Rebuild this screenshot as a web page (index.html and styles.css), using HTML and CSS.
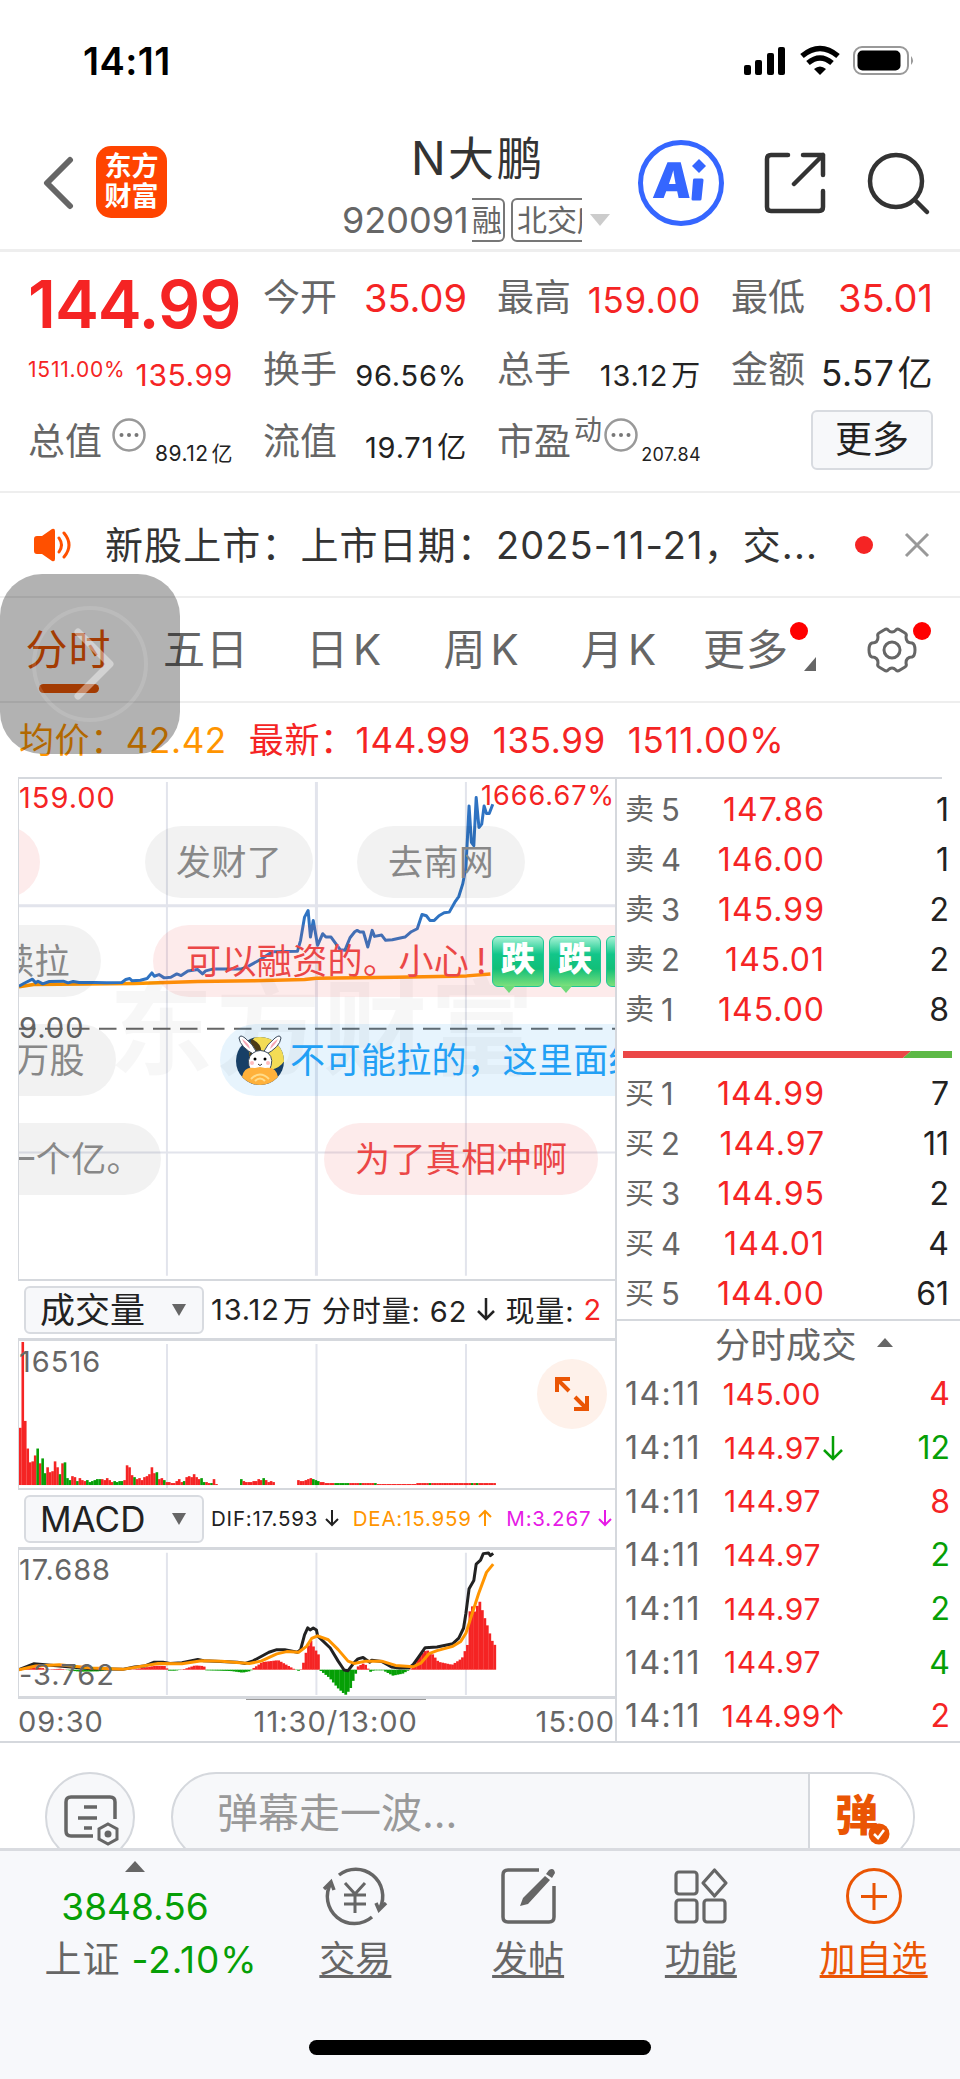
FILE: index.html
```html
<!DOCTYPE html>
<html lang="zh-CN">
<head>
<meta charset="UTF-8">
<meta name="viewport" content="width=device-width, initial-scale=1.0">
<title>N大鹏 920091</title>
<link rel="stylesheet" href="styles.css">
</head>
<body>

<div class="status">
  <span class="clock">14:11</span>
  <svg class="status-icons" width="172" height="32" viewBox="0 0 172 32">
    <rect x="0" y="20" width="7" height="10" rx="2"/>
    <rect x="11" y="15" width="7" height="15" rx="2"/>
    <rect x="23" y="8" width="7" height="22" rx="2"/>
    <rect x="34" y="2" width="7" height="28" rx="2"/>
    <path d="M58 11 Q76 -4 94 11" fill="none" stroke="#000" stroke-width="5.500"/>
    <path d="M64 18 Q76 8 88 18" fill="none" stroke="#000" stroke-width="5.500"/>
    <path d="M70 24 Q76 19 82 24 L76 30Z"/>
    <rect x="110" y="2" width="54" height="27" rx="8" fill="none" stroke="#999" stroke-width="2"/>
    <rect x="113.500" y="5.500" width="43" height="20" rx="5"/>
    <path d="M167 11 Q171 15.500 167 20Z" fill="#999"/>
  </svg>
</div>

<header class="header">
  <svg class="back" width="32" height="54" viewBox="0 0 32 54"><path d="M28 4 L5 27 L28 50" fill="none" stroke="#666" stroke-width="6" stroke-linecap="round" stroke-linejoin="round"/></svg>
  <div class="logo"><span>东方</span><span>财富</span></div>
  <div class="title">
    <h1>N大鹏</h1>
    <div class="code">
      <span>920091</span>
      <span class="tags"><i class="tag first">融</i><i class="tag">北交所</i></span>
      <b class="down"></b>
    </div>
  </div>
  <svg class="ai" width="88" height="88" viewBox="0 0 88 88">
    <circle cx="44" cy="44" r="40.500" fill="none" stroke="#3566ff" stroke-width="5"/>
    <text class="ai-text" x="15" y="59" transform="translate(5) skewX(-5)">A</text>
    <path d="M57.500 41 H65 L63 60 H56Z" fill="#3566ff" stroke="#3566ff" stroke-width="3" stroke-linejoin="round"/>
    <path d="M62 20 L69 27 L62 34 L55 27Z" fill="#3566ff"/>
  </svg>
  <svg class="share" width="62" height="62" viewBox="0 0 62 62">
    <path d="M24 3 H7 Q3 3 3 7 V55 Q3 59 7 59 H55 Q59 59 59 55 V39 M39 3 H59 V23 M59 3 L30 32" fill="none" stroke="#333" stroke-width="4.500" stroke-linecap="round" stroke-linejoin="round"/>
  </svg>
  <svg class="search" width="64" height="64" viewBox="0 0 64 64">
    <circle cx="29" cy="29" r="26" fill="none" stroke="#333" stroke-width="4.500"/>
    <path d="M48 48 L60 60" stroke="#333" stroke-width="4.500" stroke-linecap="round"/>
  </svg>
</header>

<section class="quote">
  <div class="cell"><strong class="price">144.99</strong></div>
  <div class="cell"><label>今开</label><span class="red v38">35.09</span></div>
  <div class="cell"><label>最高</label><span class="red v35 low">159.00</span></div>
  <div class="cell"><label>最低</label><span class="red v38">35.01</span></div>

  <div class="cell"><span class="red v21 raise">1511.00%</span><span class="red v30">135.99</span></div>
  <div class="cell"><label>换手</label><span class="v29">96.56%</span></div>
  <div class="cell"><label>总手</label><span class="v29">13.12<u>万</u></span></div>
  <div class="cell"><label>金额</label><span class="v35">5.57<u>亿</u></span></div>

  <div class="cell"><label>总值<svg class="dots" width="36" height="36" viewBox="0 0 36 36"><use href="#dots"/></svg></label><span class="v21">89.12<u>亿</u></span></div>
  <div class="cell"><label>流值</label><span class="v29">19.71<u>亿</u></span></div>
  <div class="cell"><label>市盈<sup>动</sup><svg class="dots near" width="36" height="36" viewBox="0 0 36 36"><g id="dots"><circle cx="18" cy="18" r="15.500" fill="none" stroke="#999" stroke-width="2.500"/><circle cx="10.500" cy="18" r="2" fill="#777"/><circle cx="18" cy="18" r="2" fill="#777"/><circle cx="25.500" cy="18" r="2" fill="#777"/></g></svg></label><span class="v18">207.84</span></div>
  <div class="cell end"><button class="more">更多</button></div>
</section>

<section class="notice">
  <svg width="40" height="34" viewBox="0 0 40 34"><path d="M1 11 Q1 8 4 8 H9 L19 1 Q22 0 22 3 V31 Q22 34 19 33 L9 26 H4 Q1 26 1 23Z" fill="#ff5000"/><path d="M26 10 Q31 17 26 24 M31 5 Q41 17 31 29" fill="none" stroke="#ff5000" stroke-width="3" stroke-linecap="round"/></svg>
  <p>新股上市：上市日期：2025-11-21，交...</p>
  <i class="dot"></i>
  <svg class="close" width="26" height="26" viewBox="0 0 26 26"><path d="M2 2 L24 24 M24 2 L2 24" stroke="#999" stroke-width="3"/></svg>
</section>

<nav class="tabs">
  <a class="active">分时</a>
  <a>五日</a>
  <a>日<s>K</s></a>
  <a>周<s>K</s></a>
  <a>月<s>K</s></a>
  <a class="more-tab">更多<i class="dot"></i><b class="corner"></b></a>
  <a class="gear">
    <svg width="50" height="46" viewBox="0 0 50 46"><g fill="none" stroke="#666" stroke-width="3"><path d="M17 3 Q20 1 21 3 Q25 7 29 3 Q30 1 33 3 L38 6 Q40 7 39 10 Q39 16 45 16 Q48 17 48 23 Q48 29 45 30 Q39 30 39 36 Q40 39 38 40 L33 43 Q30 45 29 43 Q25 39 21 43 Q20 45 17 43 L12 40 Q10 39 11 36 Q11 30 5 30 Q2 29 2 23 Q2 17 5 16 Q11 16 11 10 Q10 7 12 6Z"/><circle cx="25" cy="23" r="8"/></g></svg>
    <i class="dot"></i>
  </a>
</nav>

<div class="summary">
  <span class="orange">均价：42.42</span>
  <span>最新：144.99</span>
  <span>135.99</span>
  <span>1511.00%</span>
</div>

<main class="board">
  <div class="charts">
    <div class="chart price-chart">
      <svg class="plot" viewBox="48 24 1507 1506" preserveAspectRatio="none">
        <path class="grid" d="M422 33V1520M1178 33V1520M48 1149H1555"/>
        <path class="grid thick" d="M800 33V1520M48 406H1555"/>
        <path class="base" d="M48 776H1555"/>
        <path class="avg" d="M48 650 85 643 340 640 500 634 640 632 770 628 800 624 1000 621 1180 617 1240 611"/>
        <path class="price-line" d="M48 648 60 640 82 627 90 638 96 633 108 641 125 634 160 633 172 638 185 634 200 637 240 637 270 638 308 637 318 628 328 625 334 632 355 630 372 625 384 608 390 618 402 613 415 623 432 621 447 611 458 616 475 602 500 598 512 611 520 602 540 596 610 596 625 590 655 570 690 544 752 543 760 510 770 440 779 420 785 500 792 450 803 525 816 490 824 500 837 500 860 538 872 540 885 502 897 484 903 480 910 485 919 485 930 530 941 480 947 498 965 494 975 510 992 508 1015 502 1024 500 1040 484 1055 475 1067 432 1078 436 1087 450 1098 450 1110 436 1123 427 1136 425 1150 395 1160 378 1170 340 1178 290 1182 200 1186 105 1192 215 1198 225 1204 80 1211 170 1218 160 1224 105 1230 128 1237 128 1246 100"/>
      </svg>
      <span class="watermark">东方财富</span>
      <span class="axis top red">159.00</span>
      <span class="axis pct red">1666.67%</span>
      <span class="axis mid">9.00</span>

      <!-- danmaku -->
      <div class="bubble pink b1"></div>
      <div class="bubble b2">发财了</div>
      <div class="bubble b3">去南网</div>
      <div class="bubble b4">续拉</div>
      <div class="bubble pink b5">可以融资的。小心<s>!</s><em>跌</em><em>跌</em><em>跌</em></div>
      <div class="bubble b6">万股</div>
      <div class="bubble blue b7">
        <svg width="50" height="50" viewBox="0 0 50 50">
          <defs><clipPath id="face"><circle cx="25" cy="26" r="24"/></clipPath></defs>
          <g clip-path="url(#face)">
            <rect width="50" height="50" fill="#173f66"/>
            <circle cx="33" cy="16" r="19" fill="#f3dc55"/>
            <path d="M16 4 Q28 8 26 20 L14 22Z" fill="#4c3b16"/>
          </g>
          <g fill="#fff" stroke="#3b4a5c" stroke-width="1">
            <path d="M20 20 Q5 12 4 3 Q5 -1 10 3 Q18 9 22 18Z"/>
            <path d="M30 20 Q45 12 46 3 Q45 -1 40 3 Q32 9 28 18Z"/>
            <path d="M16 36 Q10 24 18 18 Q25 13 33 18 Q40 24 34 36Z"/>
          </g>
          <path d="M7 4 Q9 9 15 14 Q14 8 7 4ZM43 4 Q41 9 35 14 Q36 8 43 4Z" fill="#f7a6b4"/>
          <circle cx="20" cy="24" r="1.500"/><circle cx="30" cy="24" r="1.500"/>
          <circle cx="17" cy="28" r="2" fill="#fbb"/><circle cx="33" cy="28" r="2" fill="#fbb"/>
          <path d="M23 29 Q25 32 27 29" fill="none" stroke="#333"/>
          <path d="M7 42 Q9 31 20 33 L25 32 L30 33 Q41 31 43 42 Q35 50 25 50 Q15 50 7 42Z" fill="#ffb13b"/>
          <path d="M16 44 Q25 35 34 44 M20 46 Q25 41 30 46" fill="none" stroke="#ffdc8a" stroke-width="2"/>
        </svg>不可能拉的，这里面红
      </div>
      <div class="bubble b8">一个亿。</div>
      <div class="bubble pink b9">为了真相冲啊</div>
    </div>

    <div class="bar">
      <button class="picker">成交量<b></b></button>
      <span class="info">13.12<u>万</u> 分时量: 62 <svg width="20" height="24" viewBox="0 0 20 24"><path d="M10 1V22M2 14L10 22L18 14" fill="none" stroke="#222" stroke-width="2.500"/></svg> 现量: <span class="red">2</span></span>
    </div>
    <div class="chart volume-chart">
      <svg class="plot" id="volume" viewBox="0 0 596 149" preserveAspectRatio="none">
        <path class="grid" d="M148 3V149M297.500 3V149M447 3V149"/>
      </svg>
      <span class="axis vol">16516</span>
      <svg class="expand" width="70" height="70" viewBox="0 0 70 70"><circle cx="35" cy="35" r="35" fill="#fef1ea"/><path d="M20 33V20H33M20 20L32 32M37 50H50V37M50 50L38 38" fill="none" stroke="#ea5504" stroke-width="4"/></svg>
    </div>

    <div class="bar">
      <button class="picker">MACD<b></b></button>
      <span class="info small"><span>DIF:17.593 <svg width="14" height="18" viewBox="0 0 14 18"><path id="arr" d="M7 1V16M1 10L7 16L13 10" fill="none" stroke="currentColor" stroke-width="2"/></svg></span><span class="orange">DEA:15.959 <svg width="14" height="18" viewBox="0 0 14 18"><use href="#arr" transform="rotate(180 7 9)"/></svg></span><span class="purple">M:3.267 <svg width="14" height="18" viewBox="0 0 14 18"><use href="#arr"/></svg></span></span>
    </div>
    <div class="chart macd-chart">
      <svg class="plot" viewBox="48 147 1507 444" preserveAspectRatio="none">
        <path class="grid" d="M422 155V588M800 155V588M1178 155V588"/>
        <g id="macd"></g>
        <path class="dif" d="M48 511 85 493 150 500 230 508 310 510 340 503 365 500 390 488 412 488 430 492 460 490 500 480 515 484 600 488 620 492 640 484 680 458 700 450 720 450 752 458 760 450 770 405 778 384 784 390 792 384 800 390 803 408 835 445 855 485 870 512 880 514 895 490 905 478 918 474 925 480 935 488 940 482 965 486 990 503 1010 506 1035 505 1045 495 1060 470 1075 444 1105 442 1145 432 1160 415 1172 385 1178 340 1186 265 1198 240 1204 190 1215 178 1222 158 1235 156 1240 164 1247 157"/>
        <path class="dea" d="M48 511 90 500 150 496 230 506 310 510 400 492 460 493 510 484 560 485 630 492 660 485 700 463 725 456 755 458 775 440 788 416 803 408 830 420 855 450 880 485 895 492 925 485 965 485 1000 498 1045 502 1065 490 1085 462 1105 453 1145 440 1165 425 1178 400 1190 355 1210 280 1230 215 1247 190"/>
      </svg>
      <span class="axis hi">17.688</span>
      <span class="axis lo">-3.762</span>
    </div>
    <div class="times"><span>09:30</span><span class="noon">11:30/13:00</span><span>15:00</span></div>
  </div>

  <aside class="side">
    <div class="orders" id="sell"></div>
    <svg class="ratio" width="329" height="7" viewBox="0 0 329 7"><path d="M0 0H288L280 7H0Z" fill="#eb4747"/><path d="M288 0H329V7H280Z" fill="#5db946"/></svg>
    <div class="orders" id="buy"></div>
    <h2 class="ticks-title">分时成交<b></b></h2>
    <div class="ticks" id="ticks"></div>
  </aside>
</main>

<section class="danmaku">
  <div class="round">
    <svg width="56" height="52" viewBox="0 0 56 52"><g fill="none" stroke="#666" stroke-width="3.500"><path d="M51 24V7Q51 2 46 2H7Q2 2 2 7V36Q2 41 7 41H29M20 12H33M14 23H33M20 33H28"/><path d="M44 29L53 34V44L44 49L35 44V34Z" stroke-width="3"/></g><circle cx="44" cy="39" r="3.500" fill="#666"/></svg>
  </div>
  <div class="send">
    <span class="placeholder">弹幕走一波...</span>
    <span class="toggle">弹<svg width="22" height="22" viewBox="0 0 22 22"><circle cx="11" cy="11" r="10.500" fill="#ea5504"/><path d="M6 11L10 15L16 7" fill="none" stroke="#fff" stroke-width="2.500"/></svg></span>
  </div>
</section>

<footer class="tabbar">
  <div class="index">
    <b class="up"></b>
    <span class="green">3848.56</span>
    <span class="name">上证 <i class="green">-2.10%</i></span>
  </div>
  <a>
    <svg width="66" height="60" viewBox="0 0 66 60"><g fill="none" stroke="#666" stroke-width="3.500"><path d="M17 9A27 27 0 0 1 58 42M50 51A27 27 0 0 1 9 17M2 23L9 16L12 24M64 37L57 44L54 37"/><path d="M23 17L33 28L43 17M22 29H44M22 38H44M33 28V47" stroke-width="3"/></g></svg>
    交易
  </a>
  <a>
    <svg width="58" height="60" viewBox="0 0 58 60"><path d="M40 4H9Q4 4 4 9V51Q4 56 9 56H50Q55 56 55 51V20" fill="none" stroke="#666" stroke-width="3.500"/><path d="M50 4Q55 1 56 7L53 12L47 8Z M46 10L51 14L29 38L21 40L24 32Z" fill="#666"/></svg>
    发帖
  </a>
  <a>
    <svg width="56" height="60" viewBox="0 0 56 60"><g fill="none" stroke="#666" stroke-width="3.200"><rect x="3" y="6" width="21" height="22" rx="3"/><rect x="3" y="34" width="21" height="22" rx="3"/><rect x="31" y="34" width="21" height="22" rx="3"/><path d="M41.500 4L53 17L41.500 30L30 17Z" stroke-linejoin="round"/></g></svg>
    功能
  </a>
  <a class="add">
    <svg width="60" height="60" viewBox="0 0 60 60"><g fill="none" stroke="#ea5504" stroke-width="3"><circle cx="30" cy="30" r="26.500"/><path d="M30 17V44M17 30.500H43"/></g></svg>
    加自选
  </a>
</footer>
<div class="home"></div>

<!-- AssistiveTouch button -->
<div class="assist">
  <svg width="180" height="180" viewBox="0 0 180 180"><circle cx="90" cy="90" r="56" fill="none" stroke="#fff" stroke-opacity=".12" stroke-width="4"/><path d="M78 58L110 90L78 122" fill="none" stroke="#fff" stroke-opacity=".42" stroke-width="7" stroke-linecap="round" stroke-linejoin="round"/></svg>
</div>

<script>
  var sell = [["卖5", "147.86", 1], ["卖4", "146.00", 1], ["卖3", "145.99", 2], ["卖2", "145.01", 2], ["卖1", "145.00", 8]];
  var buy = [["买1", "144.99", 7], ["买2", "144.97", 11], ["买3", "144.95", 2], ["买4", "144.01", 4], ["买5", "144.00", 61]];
  var ticks = [
    ["145.00", "", 4, "red"],
    ["144.97", "down", 12, "green"],
    ["144.97", "", 8, "red"],
    ["144.97", "", 2, "green"],
    ["144.97", "", 2, "green"],
    ["144.97", "", 4, "green"],
    ["144.99", "up", 2, "red"]
  ];

  function fillOrders(id, rows) {
    document.getElementById(id).innerHTML = rows.map(function(r) {
      return "<div class='order'><label>" + r[0][0] + "<s>" + r[0][1] + "</s></label><span class='red'>" + r[1] + "</span><span>" + r[2] + "</span></div>";
    }).join("");
  }
  fillOrders("sell", sell);
  fillOrders("buy", buy);

  document.getElementById("ticks").innerHTML = ticks.map(function(t) {
    var arrow = "";
    if (t[1]) {
      arrow = "<svg class='" + t[3] + "' width='20' height='26' viewBox='0 0 20 26'><path d='" +
        (t[1] === "down" ? "M10 1V24M1 15L10 24L19 15" : "M10 25V2M1 11L10 2L19 11") +
        "' fill='none' stroke='currentColor' stroke-width='2.500'/></svg>";
    }
    return "<div class='tick'><time>14:11</time><span class='red'>" + t[0] + "</span><i>" + arrow + "</i><span class='" + t[3] + "'>" + t[2] + "</span></div>";
  }).join("");

  // Volume per minute, negative = falling
  var volume = [58, 145, 65, 37, 23, 24, 30, -37, 22, -27, -12, 18, 13, 14, 24, 18, -11, 22, -23, -7, -5, 9, 8, -4, 7, 5, 4, -5, -3, -4, -5, -6, -6, 6, 5, 7, 5, 3, -4, -3, -4, -4, 5, 20, 18, 10, -8, 6, 7, 5, 8, 9, 11, 18, 12, -13, 6, 7, -5, 3, 3, 2, 2, 4, 6, 3, -4, 8, 9, 8, 11, 8, 6, -7, -3, 3, 2, -2, 6, 1,
    0, 0, 0, 0, 0, 0, 0, 0, 0, -6, 4, 3, 3, 3, 4, 4, 6, 5, -7, 5, 3, 4, 3, 0, 0, 0, 0, 0, 0, 0, 0, 0, 5, 4, 4, 5, 6, 7, -6, -5, -4, 3, 3, 2, 2, 2];
  for (var i = volume.length; i < 192; i++) {
    volume.push((i > 126 && i < 133) || i === 137 || i === 143 || i === 165 || i === 182 || i === 184 ? -2 : (i > 143 && i < 160 ? 1 : 2));
  }
  var W = 596 / 240;
  document.getElementById("volume").innerHTML += volume.map(function(v, i) {
    var h = Math.abs(v);
    return "<rect x='" + (i * W).toFixed(2) + "' y='" + (146 - h) + "' width='2.600' height='" + h + "' fill='" + (v < 0 ? "#069f06" : "#f52424") + "'/>";
  }).join("");

  // MACD histogram, [x, value] key points
  var keys = [[48, 0], [75, 8], [105, 5], [112, 0], [150, 3], [175, -3], [200, -6], [245, -5], [275, 0], [335, 1], [390, 12], [415, 11], [422, -3], [440, -3], [460, 1], [490, 13], [512, 11], [518, -2], [580, -4], [610, -9], [630, -4], [638, 5], [660, 23], [700, 29], [725, 12], [740, 2], [755, -5], [762, 12], [772, 60], [782, 90], [790, 68], [803, 44], [806, -2], [830, -25], [850, -55], [870, -77], [882, -60], [897, -8], [902, 10], [917, 20], [926, 8], [930, -8], [942, -2], [965, -2], [990, -18], [1015, -12], [1035, 2], [1060, 45], [1075, 60], [1087, 52], [1105, 24], [1140, 15], [1165, 35], [1180, 80], [1186, 205], [1200, 170], [1207, 218], [1220, 165], [1230, 130], [1240, 90], [1253, 65]];
  var bars = "";
  for (var x = 48, k = 0; x < 1252; x += 6.28) {
    while (keys[k + 1][0] < x) k++;
    var a = keys[k], b = keys[k + 1];
    var v = a[1] + (b[1] - a[1]) * (x - a[0]) / (b[0] - a[0]);
    bars += "<rect x='" + x.toFixed(1) + "' y='" + (511 - Math.max(v, 0)).toFixed(1) + "' width='7' height='" + Math.max(Math.abs(v), 1).toFixed(1) + "' fill='" + (v < 0 ? "#069f06" : "#f52424") + "'/>";
  }
  document.getElementById("macd").innerHTML = bars;
</script>

</body>
</html>
```
FILE: styles.css
```css
* {
  box-sizing: border-box;
}
body {
  margin: 0;
  width: 960px;
  height: 2079px;
  overflow: hidden;
  position: relative;
  background: #fff;
  color: #222;
  font-family: Inter, "Noto Sans CJK SC", sans-serif;
}
h1, h2, p {
  margin: 0;
  font-weight: 400;
}
i, em {
  font-style: normal;
}
s, u {
  text-decoration: none;
}
u {
  margin-left: 3px;
}
svg {
  display: block;
  flex: none;
}
button {
  font-family: inherit;
  color: #222;
  background: #f7f8fa;
  border: 2px solid #d8dbe0;
  border-radius: 6px;
  padding: 0;
}
.red { color: #f52424; }
.green { color: #069f06; }
.orange { color: #ff9500; }
.purple { color: #e61ae6; }
.dot {
  width: 18px;
  height: 18px;
  border-radius: 50%;
  background: #f52424;
}

/* status bar */
.status {
  height: 122px;
  padding: 45px 44px 0 83px;
  display: flex;
  justify-content: space-between;
}
.clock {
  font-size: 38px;
  line-height: 32px;
  font-weight: 600;
  color: #000;
  letter-spacing: .4px;
}

/* header */
.header {
  height: 130px;
  border-bottom: 3px solid #eee;
  display: flex;
  align-items: flex-start;
  padding-left: 42px;
}
.back {
  margin-top: 34px;
}
.logo {
  width: 71px;
  height: 72px;
  margin: 24px 0 0 22px;
  padding-top: 6px;
  border-radius: 15px;
  background: #ff4400;
  color: #fff;
  font-size: 27px;
  font-weight: 700;
  line-height: 30px;
  text-align: center;
}
.logo span {
  display: block;
}
.title {
  width: 272px;
  margin-left: 175px;
}
.title h1 {
  font-size: 46px;
  line-height: 60px;
  margin-top: 6px;
  letter-spacing: 2.5px;
  text-align: center;
  color: #333;
}
.code {
  display: flex;
  align-items: center;
  height: 46px;
  margin-top: 9px;
  font-size: 36px;
  color: #666;
}
.code > span:first-child {
  width: 130px;
}
.tags {
  display: flex;
  width: 110px;
  overflow: hidden;
  font-size: 30px;
}
.tag {
  flex: none;
  height: 44px;
  line-height: 40px;
  padding: 0 4px;
  border: 2px solid #777;
  border-radius: 6px;
}
.first {
  padding-left: 0;
  border-left: 0;
  border-radius: 0 6px 6px 0;
  margin-right: 6px;
  width: 33px;
}
.down {
  margin-left: 8px;
  border: 10px solid transparent;
  border-top: 12px solid #ccc;
  border-bottom: 0;
}
.ai {
  margin: 17px 0 0 23px;
}
.ai-text {
  font-size: 49px;
  font-weight: 900;
  fill: #3566ff;
}
.share {
  margin: 30px 0 0 39px;
}
.search {
  margin: 30px 0 0 41px;
}

/* quote */
.quote {
  height: 241px;
  padding: 10px 27px 0 28px;
  display: grid;
  grid-template-columns: 205px 204px 204px 202px;
  grid-template-rows: repeat(3, 72px);
  column-gap: 30px;
  border-bottom: 2px solid #eee;
}
.cell {
  display: flex;
  justify-content: space-between;
  align-items: flex-start;
  line-height: 72px;
  height: 72px;
  white-space: nowrap;
  color: #222;
}
.cell label {
  display: flex;
  font-size: 37px;
  color: #666;
}
.cell .red {
  color: #f52424;
}
.price {
  font-size: 66px;
  font-weight: 600;
  line-height: 84px;
  letter-spacing: -1px;
  color: #f52424;
}
.v38 { font-size: 38px; }
.v35 { font-size: 35px; line-height: 78px; letter-spacing: .6px; }
.low { line-height: 76px; }
.v30 { font-size: 30px; line-height: 82px; letter-spacing: .6px; }
.v29 { font-size: 29px; line-height: 83px; letter-spacing: .8px; }
.v21 { font-size: 21px; line-height: 95px; letter-spacing: .5px; }
.v18 { font-size: 18px; line-height: 97px; letter-spacing: .4px; }
.raise {
  line-height: 71px;
  letter-spacing: .8px;
}
.cell sup {
  font-size: 28px;
  line-height: 48px;
  margin-left: 3px;
}
.dots {
  margin: 11px 0 0 9px;
}
.near {
  margin-left: 1px;
}
.end {
  justify-content: flex-end;
}
.more {
  width: 122px;
  height: 60px;
  margin-top: 4px;
  font-size: 37px;
  line-height: 52px;
}

/* notice */
.notice {
  height: 105px;
  border-bottom: 2px solid #eee;
  display: flex;
  align-items: center;
  padding-left: 33px;
}
.notice p {
  width: 715px;
  margin-left: 32px;
  padding-bottom: 5px;
  font-size: 38px;
  letter-spacing: 1.1px;
  white-space: nowrap;
  color: #333;
}
.notice .dot {
  margin-left: 35px;
}
.close {
  margin-left: 31px;
}

/* period tabs */
.tabs {
  height: 105px;
  border-bottom: 2px solid #eee;
  display: grid;
  grid-template-columns: 137px 138px 138px 137px 138px 137px 135px;
  line-height: 103px;
  font-size: 42px;
  color: #666;
  text-align: center;
  letter-spacing: 1px;
}
.tabs a {
  position: relative;
}
.tabs s {
  margin-left: 4px;
}
.tabs .active {
  color: #ea5504;
}
.active::after {
  content: "";
  position: absolute;
  left: 39px;
  top: 86px;
  width: 60px;
  height: 9px;
  border-radius: 5px;
  background: #ea5504;
}
.tabs .dot {
  position: absolute;
  top: 24px;
  left: 102px;
  background: #f00;
}
.tabs .more-tab {
  padding-right: 21px;
}
.corner {
  position: absolute;
  left: 116px;
  top: 59px;
  border-left: 12px solid transparent;
  border-bottom: 14px solid #666;
}
.gear svg {
  margin: 29px 0 0 42px;
}
.tabs .gear .dot {
  left: 88px;
}

/* latest price line */
.summary {
  height: 74px;
  padding-left: 19px;
  display: flex;
  gap: 22px;
  font-size: 35px;
  line-height: 74px;
  color: #f52424;
  letter-spacing: .6px;
}

/* board */
.board {
  display: flex;
  height: 966px;
  border-bottom: 2px solid #d5d8dd;
}
.charts {
  width: 599px;
  margin-left: 18px;
  border-right: 2px solid #d5d8dd;
}
.chart {
  position: relative;
  overflow: hidden;
  border: 2px solid #d5d8dd;
  border-width: 2px 0 2px 1px;
}
.price-chart {
  height: 504px;
}
.plot {
  position: absolute;
  left: 0;
  top: 0;
  width: 596px;
  height: 100%;
}
.plot path {
  fill: none;
  stroke-width: 3px;
  vector-effect: non-scaling-stroke;
  stroke-linejoin: round;
}
.plot .grid {
  stroke: #e2e4ec;
  stroke-width: 2px;
}
.plot .thick {
  stroke-width: 3px;
}
.plot .base {
  stroke: #666;
  stroke-width: 2px;
  stroke-dasharray: 17.5 9.5;
  stroke-dashoffset: 1;
}
.plot .avg {
  stroke: #ff9500;
  stroke-width: 3.5px;
}
.plot .price-line { stroke: #2f73c2; }
.plot .dif { stroke: #222; }
.plot .dea { stroke: #ff9500; }
.watermark {
  position: absolute;
  left: 90px;
  top: 180px;
  font-size: 104px;
  font-weight: 700;
  line-height: 140px;
  letter-spacing: 3px;
  color: rgba(0, 0, 0, .03);
}
.axis {
  position: absolute;
  left: 0;
  font-size: 29px;
  line-height: 30px;
  letter-spacing: 1px;
  color: #666;
}
.axis.red { color: #f52424; }
.axis.top { top: 4px; }
.axis.pct {
  left: auto;
  right: 0;
  top: 2px;
  font-size: 27px;
}
.axis.mid { top: 234px; }

.bubble {
  position: absolute;
  height: 72px;
  line-height: 72px;
  padding: 0 31px;
  border-radius: 36px;
  background: rgba(0, 0, 0, .05);
  color: #888;
  font-size: 35px;
  letter-spacing: .4px;
  white-space: nowrap;
}
.pink {
  background: rgba(235, 71, 71, .11);
  color: #eb4747;
}
.blue {
  background: rgba(34, 153, 238, .11);
  color: #22a0f5;
}
.b1, .b2, .b3 { top: 47px; }
.b4, .b5 { top: 146px; }
.b6, .b7 { top: 245px; }
.b8, .b9 { top: 344px; }
.b1 { right: 575px; width: 120px; }
.b2 { left: 126px; }
.b3 { left: 338px; }
.b4 { right: 514px; }
.b5 { left: 134px; display: flex; padding-left: 33px; }
.b5 s { width: 23px; padding-left: 7px; }
.b6 { right: 499px; }
.b7 { left: 201px; display: flex; padding-left: 15px; }
.b7 svg { margin: 11px 5px 0 0; }
.b8 { right: 454px; padding-right: 19px; }
.b9 { left: 305px; }
.bubble em {
  width: 52px;
  height: 51px;
  margin: 11px 5px 0 0;
  border-radius: 6px;
  border: 1px solid #1dc795;
  background: linear-gradient(#a5f3d5, #12c68a 35%, #12bf78 65%, #7be07c);
  color: #fff;
  font-size: 34px;
  font-weight: 900;
  line-height: 43px;
  text-align: center;
  position: relative;
}
.bubble em::after {
  content: "";
  position: absolute;
  left: 10px;
  top: 49px;
  border: 6px solid transparent;
  border-top: 7px solid #6fda7a;
  border-bottom: 0;
}

.bar {
  height: 57px;
  display: flex;
  align-items: center;
  padding-left: 6px;
}
.picker {
  width: 180px;
  height: 48px;
  padding: 0 16px 0 14px;
  display: flex;
  align-items: center;
  justify-content: space-between;
  font-size: 35px;
  line-height: 42px;
}
.picker b {
  border: 7px solid transparent;
  border-top: 12px solid #666;
  border-bottom: 0;
}
.info {
  display: flex;
  align-items: center;
  margin: -1px 0 0 7px;
  font-size: 29px;
  letter-spacing: .9px;
  white-space: pre;
}
.small {
  font-size: 20.5px;
  gap: 14px;
  letter-spacing: .8px;
}
.small > span {
  display: flex;
  align-items: center;
}
.volume-chart {
  height: 152px;
  border-top-width: 3px;
}
.axis.vol { top: 6px; }
.expand {
  position: absolute;
  left: 518px;
  top: 18px;
}
.macd-chart {
  height: 152px;
  border-width: 3px 0 3px 1px;
}
.axis.hi { top: 5px; }
.axis.lo { top: 110px; }
.times {
  display: flex;
  justify-content: space-between;
  font-size: 29px;
  line-height: 45px;
  letter-spacing: 1px;
  color: #666;
}
.noon {
  position: relative;
  margin-left: 32px;
}
.noon::before {
  content: "";
  position: absolute;
  left: -8px;
  right: -8px;
  top: 0;
  height: 1px;
  background: #999;
}

/* order book */
.side {
  width: 343px;
}
.orders {
  padding: 0 11px 0 8px;
}
#sell {
  padding-top: 6px;
  border-top: 2px solid #d5d8dd;
  width: 325px;
  padding-right: 0;
}
.order {
  display: grid;
  grid-template-columns: 60px 140px 1fr;
  height: 50px;
  line-height: 50px;
  font-size: 32px;
  text-align: right;
}
#sell .order {
  width: 324px;
}
.order .red {
  letter-spacing: 1px;
}
.order label {
  display: flex;
  color: #666;
  font-size: 29px;
}
.order s {
  margin-left: 7px;
  font-size: 31px;
}
.ratio {
  margin: 16px 0 11px 6px;
}
.ticks-title {
  height: 48px;
  padding-bottom: 4px;
  border-top: 2px solid #d5d8dd;
  display: flex;
  align-items: center;
  padding-left: 98px;
  font-size: 35px;
  letter-spacing: .5px;
  color: #666;
}
.ticks-title b {
  margin-left: 20px;
  border: 8px solid transparent;
  border-top: 0;
  border-bottom: 9px solid #666;
}
.ticks {
  padding: 0 10px 0 8px;
}
.tick {
  display: grid;
  grid-template-columns: 77px 119px 24px 1fr;
  align-items: center;
  height: 53.7px;
  font-size: 32px;
  text-align: right;
}
.tick time {
  color: #666;
  text-align: left;
  letter-spacing: 1.4px;
}
.tick span:nth-child(2) {
  font-size: 30px;
  letter-spacing: .6px;
}
.tick i {
  padding-left: 2px;
}

/* danmaku input */
.danmaku {
  height: 105px;
  padding: 29px 0 0 45px;
  overflow: hidden;
  display: flex;
}
.round {
  flex: none;
  width: 90px;
  height: 90px;
  border: 2px solid #d5d8dd;
  border-radius: 50%;
  background: #f7f8fa;
  padding: 21px 0 0 17px;
}
.send {
  width: 744px;
  height: 90px;
  margin-left: 36px;
  border: 2px solid #d5d8dd;
  border-radius: 45px;
  background: #f7f8fa;
  overflow: hidden;
  display: flex;
}
.placeholder {
  width: 635px;
  padding-left: 44px;
  font-size: 41px;
  line-height: 78px;
  color: #999;
}
.toggle {
  position: relative;
  flex: 1;
  padding-left: 25px;
  border-left: 2px solid #d5d8dd;
  background: #fff;
  font-size: 43px;
  font-weight: 900;
  line-height: 82px;
  color: #ea5504;
}
.toggle svg {
  position: absolute;
  left: 58px;
  top: 49px;
}

/* bottom bar */
.tabbar {
  height: 231px;
  border-top: 3px solid #d9dbe0;
  background: #f7f8fb;
  display: flex;
  padding-left: 29px;
}
.index {
  width: 240px;
  display: flex;
  flex-direction: column;
  align-items: center;
  font-size: 37px;
  line-height: 53px;
  color: #666;
  padding-right: 28px;
  white-space: nowrap;
}
.name {
  margin-left: 32px;
  letter-spacing: .9px;
}
.up {
  margin: 10px 0 8px;
  border: 10px solid transparent;
  border-top: 0;
  border-bottom: 11px solid #666;
}
.tabbar a {
  width: 173px;
  padding-top: 15px;
  display: flex;
  flex-direction: column;
  align-items: center;
  font-size: 36px;
  line-height: 66px;
  color: #666;
  text-decoration: underline;
  text-underline-offset: 3px;
  text-decoration-thickness: 3px;
}
.tabbar .add {
  color: #ea5504;
}
.home {
  position: absolute;
  left: 309px;
  top: 2040px;
  width: 342px;
  height: 15px;
  border-radius: 8px;
  background: #000;
}
.assist {
  position: absolute;
  left: 0;
  top: 574px;
  width: 180px;
  height: 180px;
  border-radius: 42px;
  background: rgba(0, 0, 0, .3);
}
```
